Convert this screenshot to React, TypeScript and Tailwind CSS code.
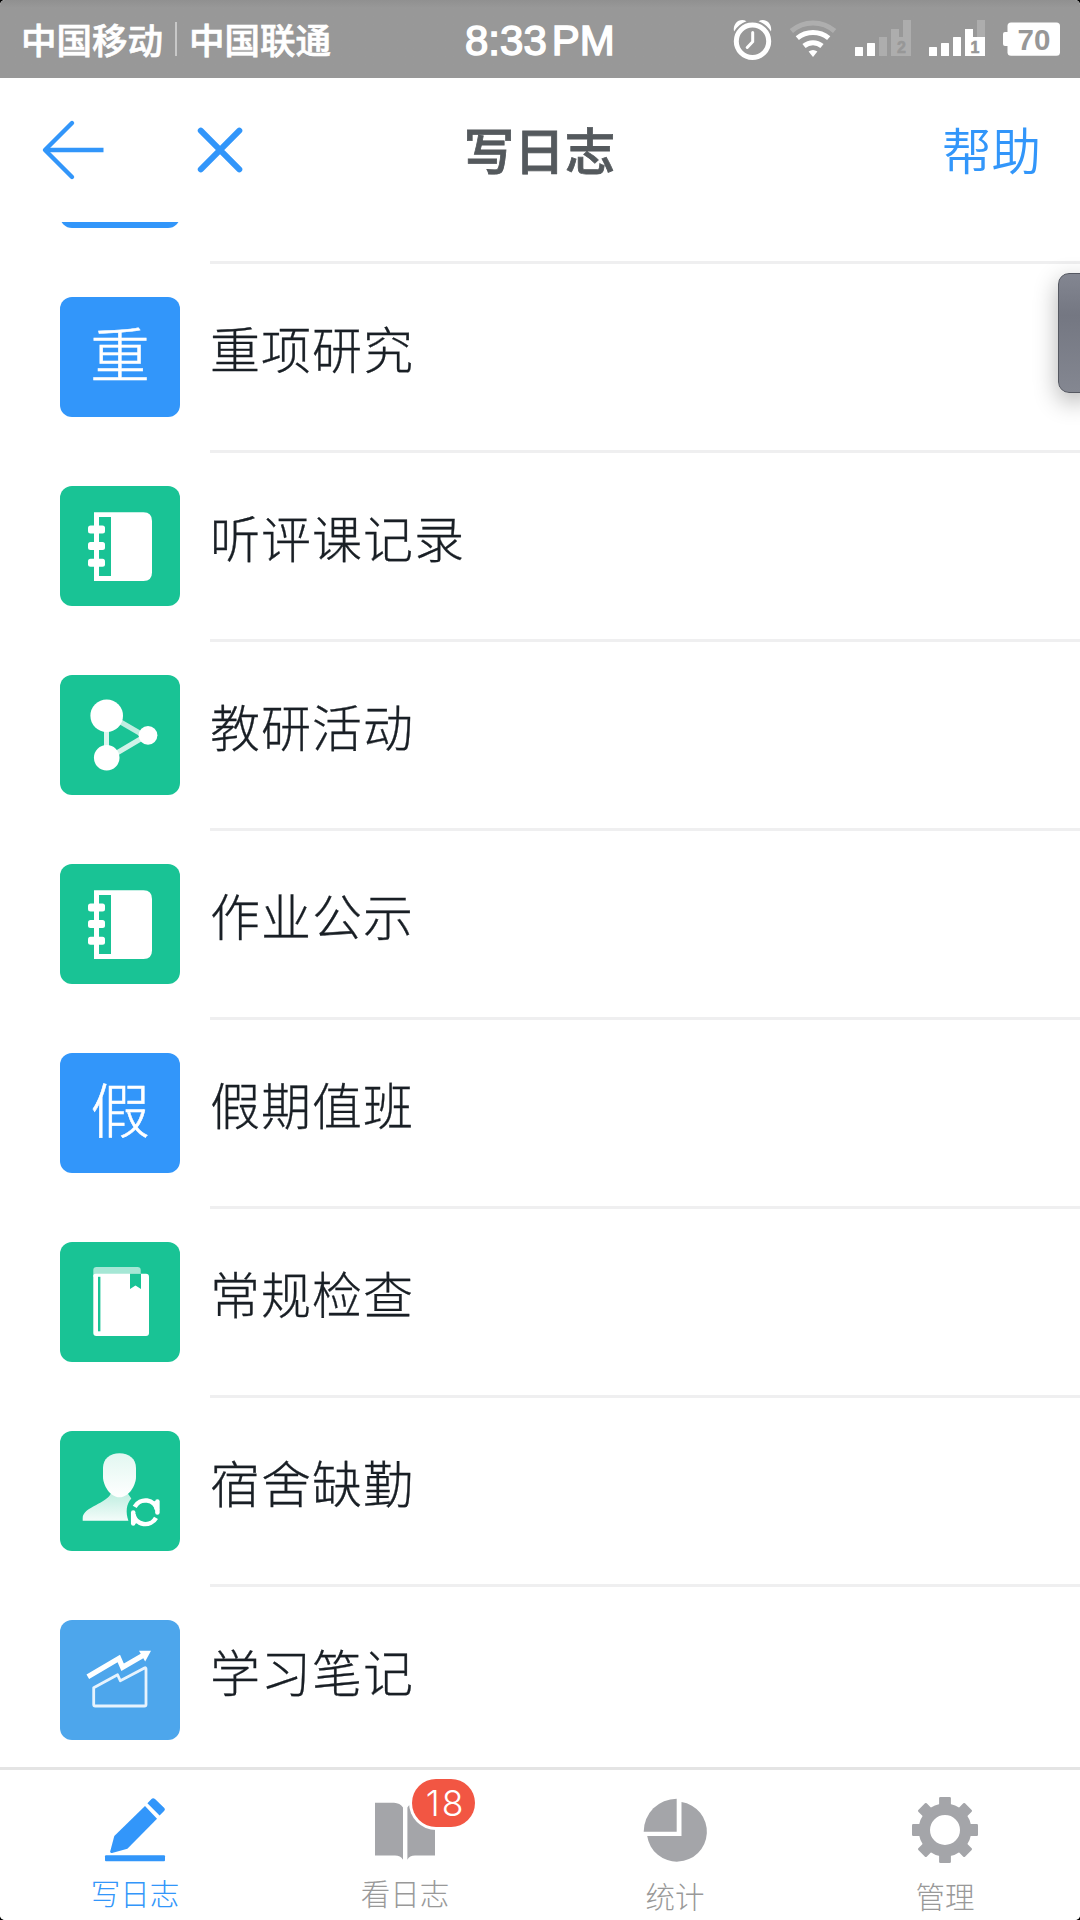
import type { ReactNode } from "react";

const rows = [
  { id: "1", label: "", letter: "", icon: null, color: "bg-[#3296fa]" },
  { id: "2", label: "重项研究", letter: "重", icon: null, color: "bg-[#3296fa]" },
  { id: "3", label: "听评课记录", letter: "", icon: NotebookIcon, color: "bg-[#19c395]" },
  { id: "4", label: "教研活动", letter: "", icon: NodesIcon, color: "bg-[#19c395]" },
  { id: "5", label: "作业公示", letter: "", icon: NotebookIcon, color: "bg-[#19c395]" },
  { id: "6", label: "假期值班", letter: "假", icon: null, color: "bg-[#3296fa]" },
  { id: "7", label: "常规检查", letter: "", icon: BookmarkIcon, color: "bg-[#19c395]" },
  { id: "8", label: "宿舍缺勤", letter: "", icon: PersonIcon, color: "bg-[#19c395]" },
  { id: "9", label: "学习笔记", letter: "", icon: ChartIcon, color: "bg-[#4da6ec]" },
];

function NotebookIcon() {
  return (
    <svg viewBox="0 0 120 120" className="w-full h-full" fill="#fff">
      <path
        fillRule="evenodd"
        d="M34 26.3H83.5Q92 26.3 92 35V86.5Q92 95 83.5 95H34ZM39 31V90H51V31Z"
      />
      <rect x="28" y="39.5" width="17" height="8" rx="2.5" />
      <rect x="28" y="56" width="17" height="8" rx="2.5" />
      <rect x="28" y="72.7" width="17" height="8" rx="2.5" />
    </svg>
  );
}

function NodesIcon() {
  return (
    <svg viewBox="0 0 120 120" className="w-full h-full" fill="#fff">
      <g stroke="#fff" strokeWidth="5">
        <path d="M46.5 50V76" opacity="0.85" />
        <path d="M58 45.5L83 60" opacity="0.72" />
        <path d="M56 78.5L83 62.5" opacity="0.8" />
      </g>
      <circle cx="46.7" cy="40.7" r="16.3" />
      <circle cx="88" cy="60.3" r="9.4" />
      <circle cx="46.7" cy="82.7" r="12.8" />
    </svg>
  );
}

function BookmarkIcon() {
  return (
    <svg viewBox="0 0 120 120" className="w-full h-full">
      <path d="M33.3 35V28Q33.3 25 36.5 25H77.5Q80.7 25 80.7 28V35Z" fill="#a5e7d5" />
      <path
        d="M33.3 33Q34 31.7 36 31.7H86Q89 31.7 89 34.7V91Q89 94 86 94H36.3Q33.3 94 33.3 91Z"
        fill="#fff"
      />
      <rect x="38" y="34.8" width="2.4" height="54.5" fill="#19c395" />
      <path d="M70 31.7H81V47L75.5 43.6L70 47Z" fill="#19c395" />
    </svg>
  );
}

function PersonIcon() {
  return (
    <svg viewBox="0 0 120 120" className="w-full h-full">
      <defs>
        <linearGradient id="head" x1="0" y1="0" x2="0" y2="1">
          <stop offset="0" stopColor="#e2f7f1" />
          <stop offset="1" stopColor="#fff" />
        </linearGradient>
        <linearGradient id="body" x1="0" y1="0" x2="0" y2="1">
          <stop offset="0" stopColor="#bfeee0" />
          <stop offset="1" stopColor="#f4fcfa" />
        </linearGradient>
      </defs>
      <path
        d="M51 62C48 72 22.7 76 22.7 87V89.7H68.4C65.5 81 66.2 73.5 71.3 67.5L67.5 62Z"
        fill="url(#body)"
      />
      <path
        d="M43 37C43 28 50 22.3 59.5 22.3S76 28 76 37V46C76 54 69 66.3 59.5 66.3S43 54 43 46Z"
        fill="url(#head)"
      />
      <g fill="none" stroke="#fff" strokeWidth="4.5">
        <path d="M74.7 75.8A12.2 12.2 0 0 1 97.3 79" />
        <path d="M97.4 70.5V81.5" strokeLinecap="round" />
        <path d="M96 86.800A12.2 12.2 0 0 1 73.4 83.500" />
        <path d="M73.2 81.5V92.5" strokeLinecap="round" />
      </g>
      <path d="M92 71L97.4 69.5V79H95Z" fill="#fff" />
      <path d="M78.5 91.5L73.2 93.5V84H75.5Z" fill="#fff" />
    </svg>
  );
}

function ChartIcon() {
  return (
    <svg viewBox="0 0 120 120" className="w-full h-full" fill="none">
      <path d="M27.8 56.7L58.8 38.5L62.6 47.3L85 34.3" stroke="#fff" strokeWidth="5.2" />
      <path d="M79 30.7H91L85.2 41.6Z" fill="#fff" />
      <path
        d="M33.7 67.7L57.6 54.8L60.3 60.8L84.5 48Q86 47.2 86 49V84.5Q86 86 84.5 86H35.2Q33.7 86 33.7 84.5Z"
        stroke="#e7f3fd"
        strokeWidth="2.8"
        strokeLinejoin="round"
      />
    </svg>
  );
}

const PencilIcon = () => (
  <svg viewBox="0 0 70 70" className="w-[70px] h-[70px]" fill="#3296fa">
    <rect x="5" y="60.3" width="60" height="5.9" rx="1" />
    <path d="M45 11L57 23.7L27.4 53.7L12 57.9Q10 58.3 10.2 56.5L14.3 41Z" />
    <path d="M47.4 8.3L51.5 4Q53 2.4 55 4L64.3 13Q65.6 14.3 64.3 15.8L59.6 20.5Z" />
  </svg>
);

const OpenBookIcon = () => (
  <svg viewBox="0 0 70 70" className="w-[70px] h-[70px]" fill="#a4a5a9">
    <path d="M5 7.7H24Q30 8 33 12.5V64.7Q30.5 60.5 25 60.5H5Z" />
    <path d="M65 7.7H46Q40 8 37.4 12.5V64.7Q39.5 60.5 45 60.5H65Z" />
  </svg>
);

const PieIcon = () => (
  <svg viewBox="0 0 70 70" className="w-[70px] h-[70px]" fill="#a4a5a9">
    <path d="M36.7 3.7V36.7H3.7A33 33 0 0 1 36.7 3.7Z" />
    <path d="M41.5 7V41H7.2A30 30 0 1 0 41.5 7Z" />
  </svg>
);

const teeth = [0, 45, 90, 135, 180, 225, 270, 315];

const GearIcon = () => (
  <svg viewBox="0 0 70 70" className="w-[70px] h-[70px]" fill="#a4a5a9">
    <circle cx="35" cy="35" r="20.7" fill="none" stroke="#a4a5a9" strokeWidth="11.4" />
    {teeth.map((angle) => (
      <rect
        key={angle}
        x="29.1"
        y="2"
        width="11.8"
        height="12"
        rx="1.2"
        transform={`rotate(${angle} 35 35)`}
      />
    ))}
  </svg>
);

const tabs = [
  { label: "写日志", icon: PencilIcon, text: "text-[#3296fa]", gap: "mt-[5px]", badge: "" },
  { label: "看日志", icon: OpenBookIcon, text: "text-[#999]", gap: "mt-[5px]", badge: "18" },
  { label: "统计", icon: PieIcon, text: "text-[#999]", gap: "mt-[8px]", badge: "" },
  { label: "管理", icon: GearIcon, text: "text-[#999]", gap: "mt-[8px]", badge: "" },
];

// alarm, wifi, two SIM signals and battery
const StatusIcons = () => (
  <svg viewBox="730 0 350 78" className="w-[350px] h-[78px]" fill="#fff">
    <circle cx="752.5" cy="41.3" r="16.2" fill="none" stroke="#fff" strokeWidth="5" />
    <path
      d="M752.7 32.5V41.7L747.2 47.5"
      fill="none"
      stroke="#fff"
      strokeWidth="3"
      strokeLinecap="round"
    />
    <path d="M734 31.5C732.5 23 740 17.5 746.5 21.2Q738.5 24 734 31.5Z" />
    <path d="M771 31.5C772.5 23 765 17.5 758.5 21.2Q766.5 24 771 31.5Z" />

    <g fill="none" stroke="#fff" strokeWidth="5">
      <path d="M791.4 31A33 33 0 0 1 834.6 31" opacity="0.22" />
      <path d="M797.3 38.2A24.5 24.5 0 0 1 828.7 38.2" />
      <path d="M804 46A14 14 0 0 1 822 46" />
    </g>
    <path d="M808.6 51.5Q813 48.5 817.4 51.5L813 57Z" />

    <rect x="855" y="47" width="8" height="9" rx="0.5" />
    <rect x="867" y="43" width="8" height="13" rx="0.5" />
    <rect x="879" y="37" width="8" height="19" fill="#adadad" />
    <path d="M891 29H899V37H903V20H911V56H891Z" fill="#adadad" />

    <rect x="929" y="47" width="8" height="9" rx="0.5" />
    <rect x="941" y="43" width="8" height="13" rx="0.5" />
    <rect x="953" y="37" width="8" height="19" rx="0.5" />
    <rect x="977" y="20" width="8" height="17" fill="#adadad" />
    <path d="M965 29H973V37H985V56H965Z" />

    <rect x="1007.5" y="22.4" width="52.5" height="33.3" rx="3.5" />
    <rect x="1003" y="32" width="8" height="14" rx="2" />
    <g
      fill="#979797"
      textAnchor="middle"
      fontWeight="700"
      fontFamily="'Liberation Sans', Arial, sans-serif"
    >
      <text x="901.5" y="53.3" fontSize="16" stroke="#979797" strokeWidth="0.6">2</text>
      <text x="975" y="53.3" fontSize="16" stroke="#979797" strokeWidth="0.6">1</text>
      <text x="1034" y="49.5" fontSize="29.5">70</text>
    </g>
  </svg>
);

function Row({ label, color, children }: { label: string; color: string; children: ReactNode }) {
  return (
    <li className="flex h-[189px] shrink-0 pl-[60px]">
      <div
        className={`mt-[33px] flex h-[120px] w-[120px] shrink-0 items-center justify-center rounded-xl ${color}`}
      >
        {children}
      </div>
      <div className="ml-[30px] flex-1 border-b-[3px] border-[#efeff0] pt-[45px] text-[50px] leading-[76px] font-light tracking-[1px] text-[#191f25] [-webkit-text-stroke:0.3px_#191f25]">
        {label}
      </div>
    </li>
  );
}

export default function App() {
  return (
    <div className="bg-black">
      <div className="relative flex h-[1920px] w-[1080px] flex-col overflow-hidden rounded-[5px] bg-white font-['Noto_Sans_CJK_SC',sans-serif]">
        {/* Status bar */}
        <div className="flex h-[78px] shrink-0 items-center bg-linear-to-b from-[#909090] via-[#989898] via-10% to-[#989898] text-white">
          <div className="flex w-[465px] items-center pb-px pl-[21px] text-[35.5px] leading-none font-medium [-webkit-text-stroke:0.7px_white]">
            <span>中国移动</span>
            <span className="mx-[12px] h-[34px] w-[2px] bg-[#c8c8c8]" />
            <span>中国联通</span>
          </div>
          <div className="w-[265px] pt-[3px] font-['Liberation_Sans',Arial,sans-serif] text-[42px] leading-none [-webkit-text-stroke:1.5px_white]">
            8:33<span className="ml-[5px]">PM</span>
          </div>
          <StatusIcons />
        </div>

        {/* Title bar */}
        <header className="grid h-[144px] shrink-0 grid-cols-3 items-center bg-white">
          <svg viewBox="0 0 360 144" className="h-[144px] w-[360px]" fill="none" stroke="#3296fa">
            <path
              d="M72 45L45 72L72 99"
              strokeWidth="4.4"
              strokeLinejoin="round"
              strokeLinecap="round"
            />
            <path d="M45 72H103.5" strokeWidth="4.4" />
            <path
              d="M200.8 52.7L239.3 91.3M239.3 52.7L200.8 91.3"
              strokeWidth="6"
              strokeLinecap="round"
            />
          </svg>
          <h1 className="pr-px pb-[3px] text-center text-[50.5px] leading-none font-medium text-[#54595d] [-webkit-text-stroke:0.8px_#54595d]">
            写日志
          </h1>
          <a className="pr-[39px] pb-[3px] text-right text-[49.5px] leading-none font-[350] text-[#3296fa]">
            帮助
          </a>
        </header>

        {/* Template list */}
        <main className="min-h-0 flex-1 overflow-hidden">
          <ul className="-mt-[147px] flex flex-col">
            {rows.map(({ id, label, letter, icon: Icon, color }) => (
              <Row key={id} label={label} color={color}>
                {Icon ? (
                  <Icon />
                ) : (
                  <span className="pb-[10px] text-[59.5px] leading-none font-light text-white [-webkit-text-stroke:0.5px_white]">
                    {letter}
                  </span>
                )}
              </Row>
            ))}
          </ul>
        </main>

        {/* Bottom tabs */}
        <nav className="grid h-[153px] shrink-0 grid-cols-4 border-t-[3px] border-[#e4e4e4] bg-white">
          {tabs.map(({ label, icon: Icon, text, gap, badge }) => (
            <a key={label} className="relative flex flex-col items-center pt-[25px]">
              <Icon />
              <span className={`text-[29.5px] leading-[44px] font-light ${text} ${gap}`}>{label}</span>
              {badge && (
                <span className="absolute top-[9px] left-[142px] flex h-[48px] w-[63px] items-center justify-center rounded-full bg-[#f25643] pt-px pl-[4px] font-['Inter',sans-serif] text-[35.5px] leading-none font-light tracking-[2px] text-white ring-[3px] ring-white">
                  {badge}
                </span>
              )}
            </a>
          ))}
        </nav>

        {/* Floating edge handle */}
        <div className="absolute top-[273px] right-[-12px] h-[120px] w-[34px] rounded-[11px] border border-[#555861] bg-linear-to-b from-[#838691] via-[#747782] via-35% to-[#848791] shadow-[0_8px_24px_rgba(0,0,0,0.3)]" />
      </div>
    </div>
  );
}
